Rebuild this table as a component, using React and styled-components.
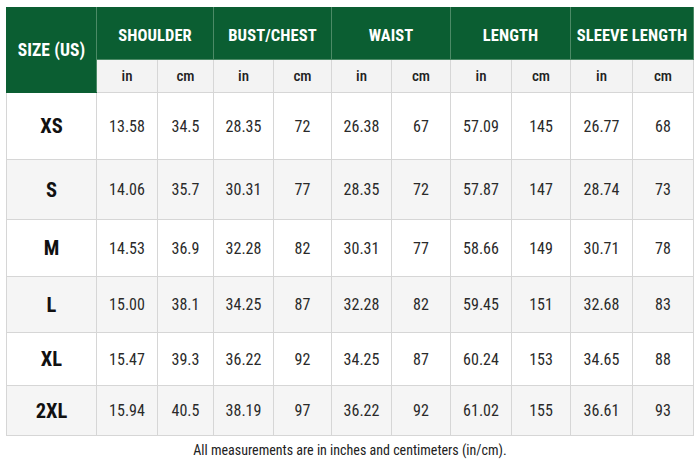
import styled, { createGlobalStyle } from "styled-components"

const GlobalStyle = createGlobalStyle`
  html, body {
    margin: 0;
    padding: 0;
    background: #ffffff;
  }
  body {
    font-family: Roboto, "Liberation Sans", sans-serif;
    font-stretch: 75%;
  }
`

const Page = styled.div`
  width: 700px;
  height: 471px;
  padding: 7px 0 0 6px;
  box-sizing: border-box;
`

const Table = styled.table`
  border-collapse: collapse;
  table-layout: fixed;
  width: 688px;
  font-stretch: 75%;
`

const HeadCell = styled.th`
  background: #0b5e32;
  color: #ffffff;
  font-weight: 700;
  font-size: 16.5px;
  height: 48px;
  padding: 3px 0 0;
  border: 1px solid #4c8a66;
  border-top-color: #0b5e32;
  text-align: center;
  white-space: nowrap;
  letter-spacing: 0.1px;
`

const SizeHead = styled(HeadCell)`
  border-left-color: #0b5e32;
  border-bottom-color: #0b5e32;
  font-size: 17.5px;
  padding: 0;
`

const UnitCell = styled.th`
  background: #f3f3f3;
  color: #222;
  font-weight: 500;
  font-size: 15px;
  height: 32px;
  padding: 0;
  border: 1px solid #d6d6d6;
  text-align: center;
`

const Row = styled.tr`
  background: ${p => (p.$alt ? "#f5f5f5" : "#ffffff")};
  height: ${p => p.$h}px;
`

const SizeCell = styled.td`
  font-weight: 700;
  font-size: 20.5px;
  color: #111;
  text-align: center;
  padding: 0;
  border: 1px solid #d6d6d6;
`

const Cell = styled.td`
  font-size: 16px;
  color: #2a2a2a;
  text-align: center;
  padding: 0;
  border: 1px solid #d6d6d6;
`

const Note = styled.p`
  margin: 6px 0 0;
  width: 688px;
  text-align: center;
  font-size: 14px;
  color: #222;
  font-stretch: 75%;
`

const widths = [90, 61, 56, 60, 58, 60, 59, 61, 59, 62, 61]
const groups = ["SHOULDER", "BUST/CHEST", "WAIST", "LENGTH", "SLEEVE LENGTH"]

const rows = [
  { size: "XS", h: 67, v: ["13.58", "34.5", "28.35", "72", "26.38", "67", "57.09", "145", "26.77", "68"] },
  { size: "S", h: 60, v: ["14.06", "35.7", "30.31", "77", "28.35", "72", "57.87", "147", "28.74", "73"] },
  { size: "M", h: 57, v: ["14.53", "36.9", "32.28", "82", "30.31", "77", "58.66", "149", "30.71", "78"] },
  { size: "L", h: 56, v: ["15.00", "38.1", "34.25", "87", "32.28", "82", "59.45", "151", "32.68", "83"] },
  { size: "XL", h: 53, v: ["15.47", "39.3", "36.22", "92", "34.25", "87", "60.24", "153", "34.65", "88"] },
  { size: "2XL", h: 50, v: ["15.94", "40.5", "38.19", "97", "36.22", "92", "61.02", "155", "36.61", "93"] },
]

const App = () => {
  return (
    <Page>
      <GlobalStyle />
      <Table>
        <colgroup>
          {widths.map((w, i) => <col key={i} style={{ width: w }} />)}
        </colgroup>
        <thead>
          <tr>
            <SizeHead rowSpan={2}>SIZE (US)</SizeHead>
            {groups.map(g => <HeadCell key={g} colSpan={2}>{g}</HeadCell>)}
          </tr>
          <tr>
            {groups.map(g => [
              <UnitCell key={g + "in"}>in</UnitCell>,
              <UnitCell key={g + "cm"}>cm</UnitCell>,
            ])}
          </tr>
        </thead>
        <tbody>
          {rows.map((r, i) => (
            <Row key={r.size} $alt={i % 2 === 1} $h={r.h}>
              <SizeCell>{r.size}</SizeCell>
              {r.v.map((val, j) => <Cell key={j}>{val}</Cell>)}
            </Row>
          ))}
        </tbody>
      </Table>
      <Note>All measurements are in inches and centimeters (in/cm).</Note>
    </Page>
  )
}

export default App
